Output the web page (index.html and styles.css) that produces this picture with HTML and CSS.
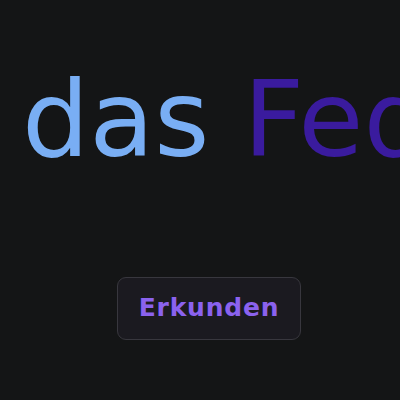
FILE: index.html
```html
<!DOCTYPE html>
<html lang="de">
<head>
<meta charset="utf-8">
<link rel="stylesheet" href="styles.css">
</head>
<body>
<main class="hero">
  <h1 class="title"><span class="light">das</span> <span class="dark">Feder</span></h1>
  <div class="actions">
    <button class="btn">Erkunden</button>
  </div>
</main>
</body>
</html>
```

FILE: styles.css
```css
html, body {
  margin: 0;
  padding: 0;
  background: #141516;
  width: 400px;
  height: 400px;
  overflow: hidden;
}
.hero {
  display: flex;
  flex-direction: column;
  padding-top: 67px;
}
.title {
  margin: 0 0 0 22px;
  font-family: "DejaVu Sans", sans-serif;
  font-weight: normal;
  font-size: 106px;
  line-height: 1;
  white-space: nowrap;
}
.light { color: #79aef4; }
.dark { color: #3a1b9e; }
.actions {
  margin-top: 104px;
  padding-left: 117px;
  display: flex;
}
.btn {
  font-family: "DejaVu Sans", sans-serif;
  font-weight: bold;
  font-size: 25px;
  letter-spacing: 0.8px;
  line-height: 29px;
  color: #8b62ee;
  background: #1b1a20;
  border: 1px solid #38373e;
  border-radius: 9px;
  padding: 15px 0 17px 0;
  width: 184px;
  text-align: center;
}
```
